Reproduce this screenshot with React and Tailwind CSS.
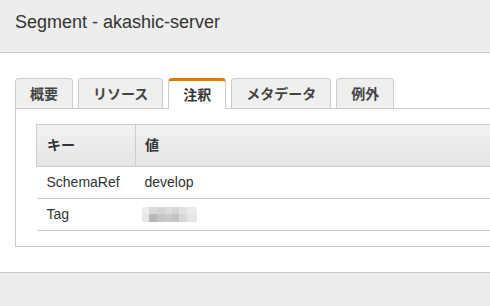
import React from 'react';

const tabs = [
  { label: '概要' },
  { label: 'リソース' },
  { label: '注釈', active: true },
  { label: 'メタデータ' },
  { label: '例外' },
];

const rows = [
  { key: 'SchemaRef', value: 'develop' },
  { key: 'Tag', value: null },
];

// pixelated (blurred) tag value
const Mosaic = () => (
  <div className="flex flex-col">
    <div className="flex h-[7px]">
      <div className="w-[7px] bg-[#ededed]" />
      <div className="w-[8px] bg-[#d9d9d9]" />
      <div className="w-[8px] bg-[#d4d4d4]" />
      <div className="w-[7px] bg-[#dedede]" />
      <div className="w-[7px] bg-[#d6d6d6]" />
      <div className="w-[8px] bg-[#e2e2e2]" />
      <div className="w-[10px] bg-[#ececec]" />
    </div>
    <div className="flex h-[8px]">
      <div className="w-[7px] bg-[#e6e6e6]" />
      <div className="w-[8px] bg-[#b9b6b9]" />
      <div className="w-[8px] bg-[#c6c4c6]" />
      <div className="w-[7px] bg-[#cacaca]" />
      <div className="w-[7px] bg-[#c4c4c4]" />
      <div className="w-[8px] bg-[#d8d8d8]" />
      <div className="w-[10px] bg-[#e6e6e6]" />
    </div>
  </div>
);

export default function App() {
  return (
    <div
      className="w-[490px] h-[306px] overflow-hidden bg-white flex flex-col text-[#333]"
      style={{ fontFamily: '"Liberation Sans", "Noto Sans CJK JP", sans-serif' }}
    >
      <div className="h-[53px] shrink-0 bg-[#ededed] border-b border-[#cccccc] pl-[15px] pt-[11px]">
        <h1 className="text-[18px] leading-[22px] text-[#333]">Segment - akashic-server</h1>
      </div>

      <div className="pl-[15px] pt-[25px] shrink-0">
        {/* tabs */}
        <div className="flex gap-[5px] items-end h-[30px] relative z-10">
          {tabs.map((t) => (
            <div
              key={t.label}
              className={
                t.active
                  ? 'h-[31px] px-[14px] bg-white border border-b-0 border-[#cccccc] border-t-[3px] border-t-[#e07b00] rounded-t-[4px] text-[14px] font-bold text-[#333] flex items-center pt-[1px] -mb-[1px]'
                  : 'h-[30px] px-[14px] bg-[#efefef] border border-b-0 border-[#cccccc] rounded-t-[4px] text-[14px] font-bold text-[#444] flex items-center pt-[1px]'
              }
            >
              {t.label}
            </div>
          ))}
        </div>

        {/* panel */}
        <div className="w-[540px] h-[139px] border border-[#cccccc] pl-[20px] pt-[15px]">
          <table className="w-[500px] border-collapse text-[14px]">
            <thead>
              <tr className="h-[42px] bg-gradient-to-b from-[#f2f2f2] to-[#e5e5e5]">
                <th className="w-[99px] border border-[#cccccc] text-left font-bold pl-[10px] text-[#333]">キー</th>
                <th className="border border-[#cccccc] border-r-0 text-left font-bold pl-[9px] text-[#333]">値</th>
              </tr>
            </thead>
            <tbody>
              {rows.map((r) => (
                <tr key={r.key} className="h-[32px] border-b border-[#cccccc]">
                  <td className="pl-[10px] text-[#333]">{r.key}</td>
                  <td className="pl-[9px] text-[#333]">
                    {r.value ? r.value : <div className="ml-[-3px]"><Mosaic /></div>}
                  </td>
                </tr>
              ))}
            </tbody>
          </table>
        </div>
      </div>

      <div className="mt-[25px] flex-1 bg-[#ededed] border-t border-[#cccccc]" />
    </div>
  );
}
